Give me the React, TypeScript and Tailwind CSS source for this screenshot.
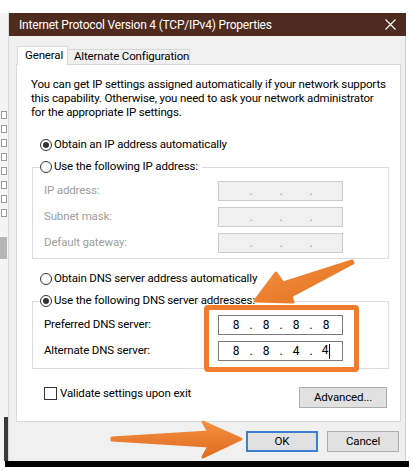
import React from "react";

const Radio = ({ checked }: { checked?: boolean }) => (
  <span className="w-[12px] h-[12px] rounded-full border border-[#333] bg-white flex items-center justify-center shrink-0">
    {checked && <span className="w-[6px] h-[6px] rounded-full bg-[#333]" />}
  </span>
);

const IpBox = ({ parts, disabled, caret }: { parts: string[]; disabled?: boolean; caret?: boolean }) => (
  <div
    className={
      "relative w-[125px] h-full flex items-center pl-[2px] border text-[12px] " +
      (disabled ? "bg-[#f0f0f0] border-[#cccccc] text-[#a0a0a0]" : "bg-white border-[#7a7a7a] text-black")
    }
  >
    {parts.map((p, i) => (
      <React.Fragment key={i}>
        {i > 0 && <span className="w-0 flex justify-center">.</span>}
        <span className="w-[30px] flex justify-center">
          {p}
          {caret && i === 3 && <span className="w-px h-[15px] bg-black ml-[1px]" />}
        </span>
      </React.Fragment>
    ))}
  </div>
);

const Row = ({ label, children, disabled }: { label: string; children: React.ReactNode; disabled?: boolean }) => (
  <div className="flex items-center h-[20px] pl-[11px]">
    <span className={"w-[174px] " + (disabled ? "text-[#9d9d9d]" : "text-black")}>{label}</span>
    {children}
  </div>
);

const Button = ({ label, primary, className }: { label: string; primary?: boolean; className?: string }) => (
  <div
    className={
      "flex items-center justify-center bg-[#e1e1e1] " +
      (primary ? "border-2 border-[#3c7fd1] " : "border border-[#adadad] ") +
      (className ?? "")
    }
  >
    {label}
  </div>
);

export default function App() {
  const empty = ["", "", "", ""];
  return (
    <div className="relative w-[412px] h-[471px] bg-white overflow-hidden font-['Roboto',sans-serif] text-[11.5px] tracking-[-0.15px] text-black leading-none whitespace-nowrap">
      <div className="h-[13px] bg-white" />
      <div className="flex h-[448px]">
        {/* strip of the window behind */}
        <div className="w-[9px] h-full bg-[#f4f4f4] flex flex-col items-start pt-[98px] gap-[6px] border-r border-[#d8d8d8]">
          {[0, 1, 2, 3, 4, 5, 6, 7].map((i) => (
            <span key={i} className="w-[6px] h-[8px] border border-[#999] bg-white ml-[1px]" />
          ))}
          <span className="w-[7px] h-[22px] bg-[#b5b5b5] mt-[14px]" />
          <span className="w-[4px] self-end flex-1 bg-[#3a3a3a] mt-[152px]" />
        </div>

        {/* dialog */}
        <div className="w-[397px] h-full flex flex-col">
          <div className="h-[23px] bg-[#4f2a1f] text-white flex items-center justify-between pl-[10px] pr-[8px]">
            <span className="text-[12px] tracking-[-0.2px]">Internet Protocol Version 4 (TCP/IPv4) Properties</span>
            <svg width="11" height="11" viewBox="0 0 11 11" className="mr-[2px]">
              <path d="M0.5 0.5 L10.5 10.5 M10.5 0.5 L0.5 10.5" stroke="#fff" strokeWidth="1.1" />
            </svg>
          </div>

          <div className="h-[425px] bg-[#f0f0f0] flex flex-col pt-[10px] border-r border-[#cfcfcf]">
            {/* tabs */}
            <div className="flex items-end h-[18px] ml-[8px]">
              <div className="relative z-10 h-[19px] -mb-px w-[51px] bg-white border-x border-t border-[#d9d9d9] flex items-center pl-[7px]">
                General
              </div>
              <div className="h-[15px] w-[122px] bg-[#f0f0f0] border-r border-t border-[#d9d9d9] flex items-center pl-[6px]">
                Alternate Configuration
              </div>
            </div>

            {/* panel */}
            <div className="ml-[7px] w-[385px] h-[358px] bg-white border border-[#d9d9d9] flex flex-col">
              <p className="pt-[12px] pl-[14px] leading-[14px]">
                You can get IP settings assigned automatically if your network supports
                <br />
                this capability. Otherwise, you need to ask your network administrator
                <br />
                for the appropriate IP settings.
              </p>

              <div className="mt-[18px] ml-[23px] h-[16px] flex items-center gap-[2px]">
                <Radio checked />
                <span>Obtain an IP address automatically</span>
              </div>

              <fieldset className="mt-[6px] ml-[15px] w-[357px] border border-[#dcdcdc] pb-[5px]">
                <legend className="ml-[7px] h-[16px] flex items-center gap-[2px] pr-[4px]">
                  <Radio />
                  <span>Use the following IP address:</span>
                </legend>
                <div className="flex flex-col gap-[6px] pt-[6px]">
                  <Row label="IP address:" disabled>
                    <IpBox parts={empty} disabled />
                  </Row>
                  <Row label="Subnet mask:" disabled>
                    <IpBox parts={empty} disabled />
                  </Row>
                  <Row label="Default gateway:" disabled>
                    <IpBox parts={empty} disabled />
                  </Row>
                </div>
              </fieldset>

              <div className="mt-[12px] ml-[23px] h-[16px] flex items-center gap-[2px]">
                <Radio />
                <span>Obtain DNS server address automatically</span>
              </div>

              <fieldset className="mt-[6px] ml-[15px] w-[357px] border border-[#dcdcdc] pb-[7px]">
                <legend className="ml-[7px] h-[16px] flex items-center gap-[2px] pr-[4px]">
                  <Radio checked />
                  <span>Use the following DNS server addresses:</span>
                </legend>
                <div className="flex flex-col gap-[6px] pt-[6px]">
                  <Row label="Preferred DNS server:">
                    <IpBox parts={["8", "8", "8", "8"]} />
                  </Row>
                  <Row label="Alternate DNS server:">
                    <IpBox parts={["8", "8", "4", "4"]} caret />
                  </Row>
                </div>
              </fieldset>

              <div className="mt-[18px] flex items-start justify-between pl-[27px] pr-[13px]">
                <div className="flex items-center gap-[3px] h-[13px]">
                  <span className="w-[13px] h-[13px] border border-[#333] bg-white" />
                  <span>Validate settings upon exit</span>
                </div>
                <Button label="Advanced..." className="w-[88px] h-[21px]" />
              </div>
            </div>

            {/* footer buttons */}
            <div className="mt-[9px] flex justify-end gap-[9px] pr-[6px]">
              <Button label="OK" primary className="w-[72px] h-[21px]" />
              <Button label="Cancel" className="w-[72px] h-[21px]" />
            </div>
          </div>
        </div>
        <div className="w-[6px] h-full bg-white" />
      </div>
      <div className="h-[6px] ml-[5px] w-[404px] bg-black" />

      {/* annotation overlay */}
      <div className="absolute left-[204px] top-[305px] w-[155px] h-[67px] border-[5px] border-[#ef7d2d] rounded-[4px]" />
      <svg className="absolute inset-0 pointer-events-none" width="412" height="471" viewBox="0 0 412 471">
        <defs>
          <linearGradient id="g1" x1="0" y1="0" x2="1" y2="1">
            <stop offset="0" stopColor="#f39040" />
            <stop offset="1" stopColor="#e2701f" />
          </linearGradient>
          <linearGradient id="g2" x1="0" y1="0" x2="0" y2="1">
            <stop offset="0" stopColor="#f39040" />
            <stop offset="1" stopColor="#e06c20" />
          </linearGradient>
        </defs>
        <polygon
          points="255,301 276,273 283,283 352,261 353,263 291,296 293,302"
          fill="url(#g1)"
          stroke="url(#g1)"
          strokeWidth="3"
          strokeLinejoin="round"
        />
        <polygon
          points="112,438 209,432 203,422 241,439 203,457 209,446 112,440"
          fill="url(#g2)"
          stroke="url(#g2)"
          strokeWidth="3"
          strokeLinejoin="round"
        />
      </svg>
    </div>
  );
}
